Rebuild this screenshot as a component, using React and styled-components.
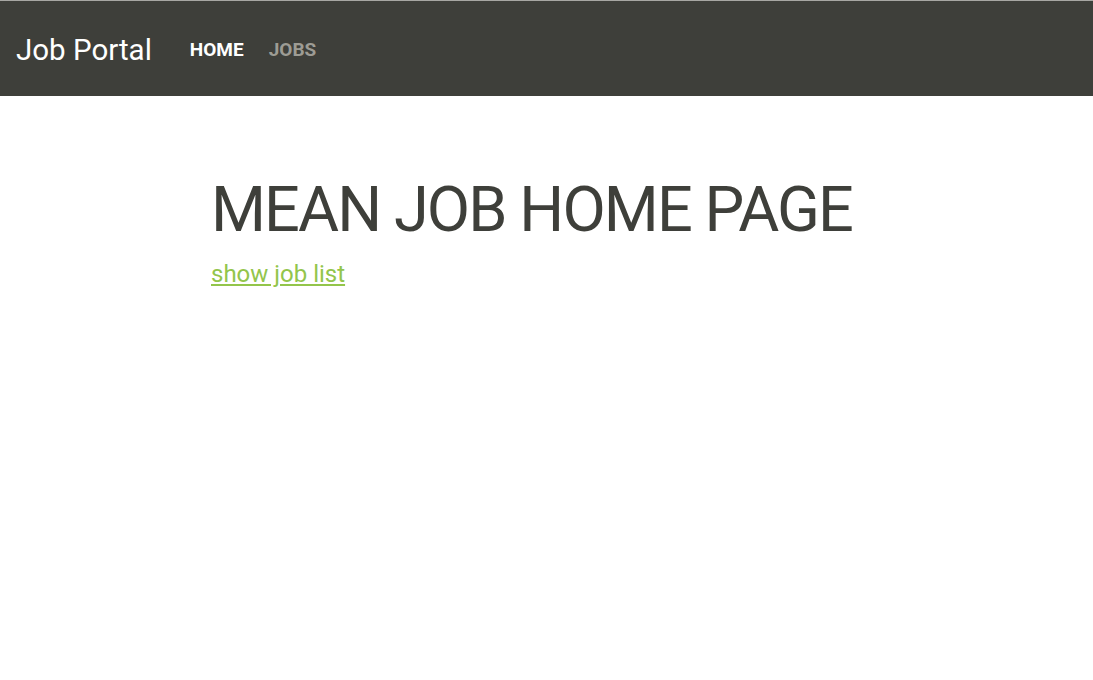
import React from "react";
import styled, { createGlobalStyle } from "styled-components";

const GlobalStyle = createGlobalStyle`
  body {
    margin: 0;
    background: #ffffff;
    font-family: Roboto, "Liberation Sans", sans-serif;
  }
`;

const Page = styled.div`
  min-height: 680px;
  border-top: 1px solid #a7a7a3;
`;

const Navbar = styled.nav`
  height: 95px;
  background-color: #3e3f3a;
  display: flex;
  align-items: center;
  padding: 0 16px;
`;

const Brand = styled.a`
  color: #ffffff;
  font-size: 29.5px;
  text-decoration: none;
  margin-right: 38px;
  margin-top: 2px;
`;

const NavList = styled.ul`
  list-style: none;
  margin: 2px 0 0;
  padding: 0;
  display: flex;
  gap: 25px;
`;

const NavItem = styled.li`
  font-size: 19px;
  font-weight: 700;
  text-transform: uppercase;
  color: ${(props) => (props.active ? "#ffffff" : "#9d9c94")};
  cursor: pointer;
`;

const Main = styled.main`
  padding: 79px 0 0 211px;
`;

const Title = styled.h1`
  margin: 0;
  font-size: 63px;
  font-weight: 400;
  letter-spacing: -1.9px;
  color: #3e3f3a;
  line-height: 1.1;
`;

const JobLink = styled.a`
  display: inline-block;
  margin-top: 16px;
  font-size: 24px;
  color: #93c54b;
  text-decoration: underline;
`;

const App = () => {
  return (
    <Page>
      <GlobalStyle />
      <Navbar>
        <Brand href="#">Job Portal</Brand>
        <NavList>
          <NavItem active>Home</NavItem>
          <NavItem>Jobs</NavItem>
        </NavList>
      </Navbar>
      <Main>
        <Title>MEAN JOB HOME PAGE</Title>
        <JobLink href="#">show job list</JobLink>
      </Main>
    </Page>
  );
};

export default App;
